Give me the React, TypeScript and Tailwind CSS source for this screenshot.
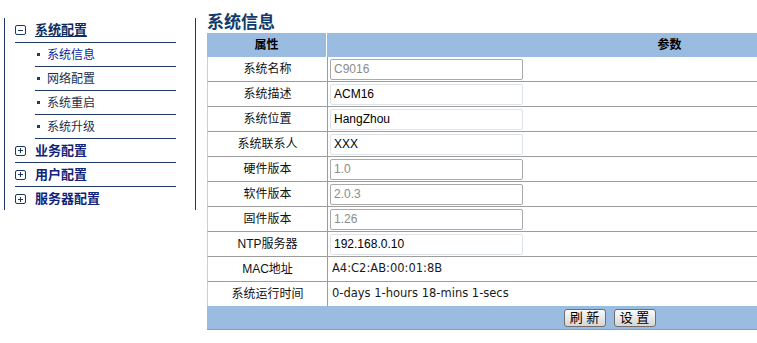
const rows: { label: string; value: string; kind: "disabled" | "input" | "text" }[] = [
  { label: "系统名称", value: "C9016", kind: "disabled" },
  { label: "系统描述", value: "ACM16", kind: "input" },
  { label: "系统位置", value: "HangZhou", kind: "input" },
  { label: "系统联系人", value: "XXX", kind: "input" },
  { label: "硬件版本", value: "1.0", kind: "disabled" },
  { label: "软件版本", value: "2.0.3", kind: "disabled" },
  { label: "固件版本", value: "1.26", kind: "disabled" },
  { label: "NTP服务器", value: "192.168.0.10", kind: "input" },
  { label: "MAC地址", value: "A4:C2:AB:00:01:8B", kind: "text" },
  { label: "系统运行时间", value: "0-days 1-hours 18-mins 1-secs", kind: "text" },
];

function Box({ open }: { open: boolean }) {
  return (
    <span className="relative flex h-[10px] w-[11px] items-center justify-center rounded-[2px] border border-[#1f3864]">
      <span className="h-px w-[5px] bg-[#1f3864]" />
      {!open && <span className="absolute h-[5px] w-px bg-[#1f3864]" />}
    </span>
  );
}

function Sidebar() {
  const subs = ["系统信息", "网络配置", "系统重启", "系统升级"];
  return (
    <div className="ml-[4px] mt-[18px] h-[192px] w-[192px] shrink-0 border-x border-[#1f3864] pl-[10px]">
      <div className="w-[161px]">
        <div className="flex h-[25px] items-center gap-[9px] border-b border-[#1f3864]">
          <Box open />
          <span className="text-[13px] font-bold text-[#0d2c5e] underline underline-offset-2">系统配置</span>
        </div>
        {subs.map((s, i) => (
          <div key={s} className="ml-[20px] flex h-[24px] items-center gap-[7px] border-b border-[#1f3864] pl-[2px]">
            <span className="h-[3px] w-[3px] bg-[#1f3864]" />
            <span className={`text-[12px] ${i === 0 ? "text-[#0a1f9a]" : "text-[#1c2f4d]"}`}>{s}</span>
          </div>
        ))}
        {["业务配置", "用户配置", "服务器配置"].map((s, i) => (
          <div
            key={s}
            className={`flex h-[24px] items-center gap-[9px] ${i < 2 ? "border-b border-[#1f3864]" : ""}`}
          >
            <Box open={false} />
            <span className="text-[13px] font-bold text-[#12237a]">{s}</span>
          </div>
        ))}
      </div>
    </div>
  );
}

function Value({ row }: { row: (typeof rows)[number] }) {
  if (row.kind === "text") {
    return <span className="pl-[4px] font-['DejaVu_Sans',sans-serif] text-[11.5px] text-[#1a1a1a]">{row.value}</span>;
  }
  const disabled = row.kind === "disabled";
  return (
    <input
      readOnly
      disabled={disabled}
      value={row.value}
      className={`ml-[2px] h-[21px] w-[193px] rounded-[2px] border bg-white px-[3px] text-[12px] ${
        disabled ? "border-[#a9a9a9] text-[#8c8c8c]" : "border-[#dfe4ea] text-black"
      }`}
    />
  );
}

export default function App() {
  return (
    <div className="flex h-[343px] w-[757px] overflow-hidden bg-white font-['Liberation_Sans','Noto_Sans_CJK_SC',sans-serif]">
      <Sidebar />
      <div className="ml-[11px] shrink-0">
        <div className="h-[33px] pt-[14px] text-[17px] font-bold leading-[17px] text-[#103a6b]">系统信息</div>
        <div className="w-[805px]">
          <div className="flex h-[24px] bg-[#9abce1] text-[12px] font-bold text-black">
            <div className="flex w-[120px] items-center justify-center border-r border-white">属性</div>
            <div className="flex flex-1 items-center justify-center">参数</div>
          </div>
          {rows.map((r, i) => (
            <div
              key={r.label}
              className={`flex border-l border-[#cfcfcf] ${i < rows.length - 1 ? "h-[25px] border-b border-b-[#9c9c9c]" : "h-[24px]"}`}
            >
              <div className="flex w-[120px] items-center justify-center border-r border-[#9c9c9c] text-[12px] text-[#111]">
                {r.label}
              </div>
              <div className="flex flex-1 items-center">
                <Value row={r} />
              </div>
            </div>
          ))}
          <div className="flex h-[24px] items-center justify-center gap-[8px] border-b border-[#9c9c9c] bg-[#9abce1]">
            {["刷 新", "设 置"].map((b) => (
              <button
                key={b}
                className="flex h-[18px] w-[42px] items-center justify-center rounded-[3px] border border-[#6f6f6f] bg-gradient-to-b from-[#fafafa] to-[#d6d6d6] text-[13px] leading-none text-black"
              >
                {b}
              </button>
            ))}
          </div>
        </div>
      </div>
    </div>
  );
}
